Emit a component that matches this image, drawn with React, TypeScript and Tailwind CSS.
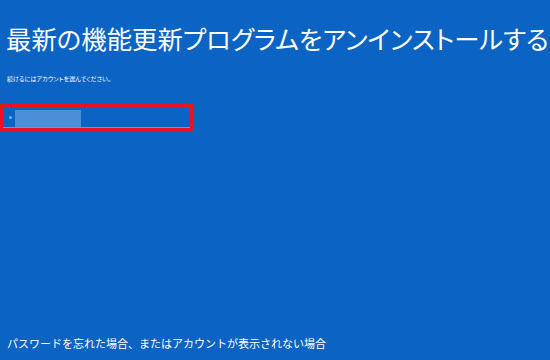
export default function App() {
  return (
    <main
      className="flex h-[360px] w-[550px] flex-col overflow-hidden bg-[#0b63c3] text-white"
      style={{ fontFamily: '"Noto Sans CJK JP", sans-serif' }}
    >
      <h1 className="mt-[20px] whitespace-nowrap pl-[6px] text-[25.4px] leading-[36px] font-normal [font-feature-settings:'palt']">
        最新の機能更新プログラムをアンインストールする
      </h1>
      <p className="mt-[19px] pl-[7px] text-[6px] leading-[8px] tracking-[0.1px] [font-feature-settings:'palt']">
        続けるにはアカウントを選んでください。
      </p>
      <div className="mt-[21px] w-[193px] border-[3px] border-[#e8141c]">
        <div className="flex h-[21px] items-center border-b border-[#5b9be0]">
          <span className="ml-[6px] h-[3px] w-[3px] rounded-full bg-[#4fc3f7]" />
          <span className="ml-[3px] mt-[3px] h-[17px] w-[66px] self-start bg-[#4c8fd8]" />
        </div>
      </div>
      <div className="flex-1" />
      <p className="mb-[9px] pl-[7px] text-[11px] leading-[16px]">
        パスワードを忘れた場合、またはアカウントが表示されない場合
      </p>
    </main>
  );
}
